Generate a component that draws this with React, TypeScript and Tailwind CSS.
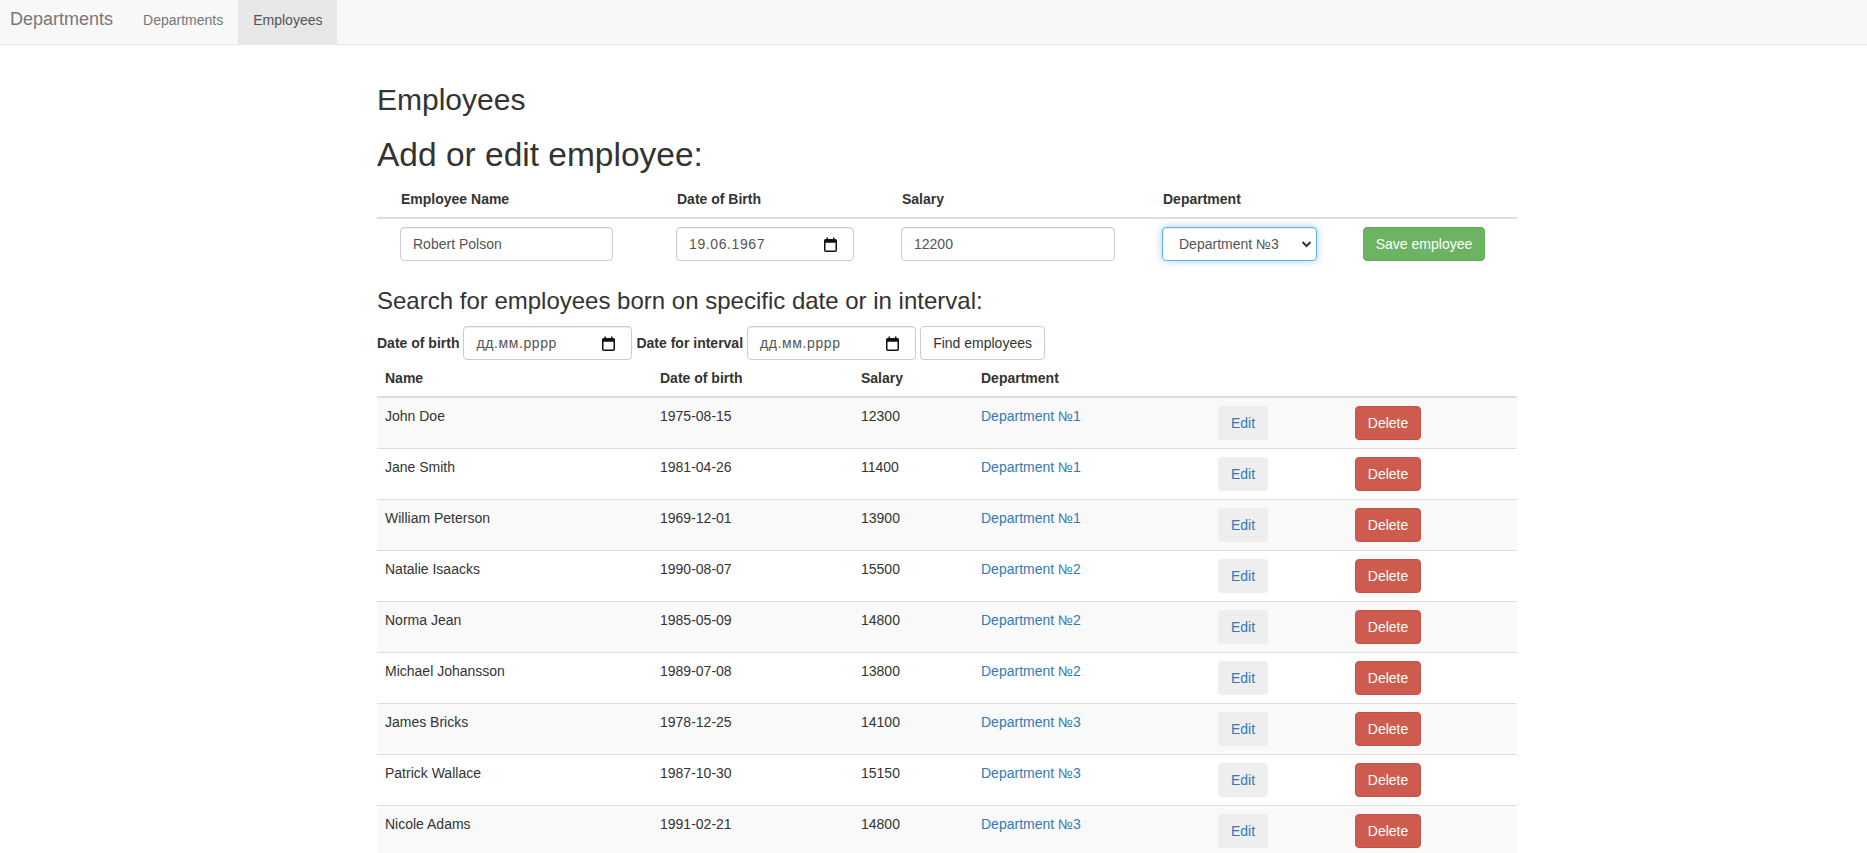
import React from 'react'

const employees = [
  { name: 'John Doe', born: '1975-08-15', salary: '12300', dept: 'Department №1' },
  { name: 'Jane Smith', born: '1981-04-26', salary: '11400', dept: 'Department №1' },
  { name: 'William Peterson', born: '1969-12-01', salary: '13900', dept: 'Department №1' },
  { name: 'Natalie Isaacks', born: '1990-08-07', salary: '15500', dept: 'Department №2' },
  { name: 'Norma Jean', born: '1985-05-09', salary: '14800', dept: 'Department №2' },
  { name: 'Michael Johansson', born: '1989-07-08', salary: '13800', dept: 'Department №2' },
  { name: 'James Bricks', born: '1978-12-25', salary: '14100', dept: 'Department №3' },
  { name: 'Patrick Wallace', born: '1987-10-30', salary: '15150', dept: 'Department №3' },
  { name: 'Nicole Adams', born: '1991-02-21', salary: '14800', dept: 'Department №3' },
]

const CalendarIcon = () => (
  <svg width="13" height="15" viewBox="0 0 13 15" className="shrink-0">
    <rect x="0.75" y="2.75" width="11.5" height="11.5" rx="1" fill="none" stroke="#111" strokeWidth="1.5" />
    <rect x="0.75" y="2.75" width="11.5" height="3" fill="#111" />
    <rect x="2.5" y="0.5" width="1.5" height="3" fill="#111" />
    <rect x="9" y="0.5" width="1.5" height="3" fill="#111" />
  </svg>
)

const inputBase =
  'h-[34px] rounded-[4px] border border-[#ccc] bg-white px-3 text-[14px] text-[#555] shadow-[inset_0_1px_1px_rgba(0,0,0,0.075)]'

const DateField = ({ value, className }: { value: string; className: string }) => (
  <div className={`${inputBase} flex items-center justify-between pr-[16px] ${className}`}>
    <span className="tracking-[0.6px]">{value}</span>
    <CalendarIcon />
  </div>
)

const Navbar = () => (
  <div className="flex h-[45px] border-b border-[#e7e7e7] bg-[#f8f8f8]">
    <a className="pl-[10px] pr-[15px] pt-[9px] text-[18px] leading-[20px] text-[#777]">Departments</a>
    <a className="px-[15px] pt-[10px] text-[14px] leading-[20px] text-[#777]">Departments</a>
    <a className="bg-[#e7e7e7] px-[15px] pt-[10px] text-[14px] leading-[20px] text-[#555]">Employees</a>
  </div>
)

const EmployeeForm = () => (
  <div className="mt-[8px]">
    <div className="grid h-[38px] grid-cols-[299px_225px_261px_201px_154px] border-b-2 border-[#ddd] text-[14px] font-bold leading-[20px] text-[#333]">
      <div className="pl-[24px] pt-2">Employee Name</div>
      <div className="pl-px pt-2">Date of Birth</div>
      <div className="pl-px pt-2">Salary</div>
      <div className="pl-px pt-2">Department</div>
      <div />
    </div>
    <div className="grid grid-cols-[299px_225px_261px_201px_154px] py-2">
      <div className="pl-[23px]">
        <div className={`${inputBase} flex w-[213px] items-center`}>Robert Polson</div>
      </div>
      <div>
        <DateField value="19.06.1967" className="w-[178px]" />
      </div>
      <div>
        <div className={`${inputBase} flex w-[214px] items-center`}>12200</div>
      </div>
      <div>
        <div className="flex h-[34px] w-[155px] items-center justify-between rounded-[4px] border border-[#66afe9] bg-white pl-[16px] pr-[4px] text-[14px] text-[#555] shadow-[inset_0_1px_1px_rgba(0,0,0,0.075),0_0_8px_rgba(102,175,233,0.6)]">
          <span>Department №3</span>
          <svg width="11" height="8" viewBox="0 0 11 8">
            <path d="M1.5 2 L5.5 6 L9.5 2" fill="none" stroke="#333" strokeWidth="2" />
          </svg>
        </div>
      </div>
      <div>
        <button className="h-[34px] w-[122px] rounded-[4px] border border-[#64ad58] bg-[#6db462] text-[14px] text-white">
          Save employee
        </button>
      </div>
    </div>
  </div>
)

const SearchForm = () => (
  <div className="mt-[12px] flex items-center gap-[4px] text-[14px] text-[#333]">
    <span className="font-bold">Date of birth</span>
    <DateField value="дд.мм.рррр" className="w-[169px]" />
    <span className="font-bold">Date for interval</span>
    <DateField value="дд.мм.рррр" className="w-[169px]" />
    <button className="h-[34px] w-[125px] rounded-[4px] border border-[#ccc] bg-white text-[14px] text-[#333]">
      Find employees
    </button>
  </div>
)

const cols = 'grid grid-cols-[275px_201px_120px_237px_137px_170px]'

const EmployeeTable = () => (
  <div className="text-[14px] leading-[20px] text-[#333]">
    <div className={`${cols} border-b-2 border-[#ddd] font-bold`}>
      <div className="p-2">Name</div>
      <div className="p-2">Date of birth</div>
      <div className="p-2">Salary</div>
      <div className="p-2">Department</div>
      <div className="p-2" />
      <div className="p-2" />
    </div>
    {employees.map((e, i) => (
      <div key={e.name} className={`${cols} border-b border-[#ddd] ${i % 2 === 0 ? 'bg-[#f9f9f9]' : 'bg-white'}`}>
        <div className="p-2">{e.name}</div>
        <div className="p-2">{e.born}</div>
        <div className="p-2">{e.salary}</div>
        <div className="p-2">
          <a className="text-[#337ab7]">{e.dept}</a>
        </div>
        <div className="p-2">
          <button className="h-[34px] w-[50px] rounded-[4px] bg-[#eeeeee] text-[#337ab7]">Edit</button>
        </div>
        <div className="p-2">
          <button className="h-[34px] w-[66px] rounded-[4px] border border-[#c55347] bg-[#cd5c4f] text-white">
            Delete
          </button>
        </div>
      </div>
    ))}
  </div>
)

const App = () => {
  return (
    <div className="h-[853px] overflow-hidden bg-white font-['Liberation_Sans',Arial,sans-serif] text-[#333]">
      <Navbar />
      <div className="ml-[377px] w-[1140px]">
        <h2 className="mt-[38px] text-[30px] leading-[33px] text-[#333]">Employees</h2>
        <h2 className="mt-[21px] text-[33.5px] leading-[36px] text-[#333]">Add or edit employee:</h2>
        <EmployeeForm />
        <h3 className="mt-[19px] text-[24px] leading-[26px] text-[#333]">
          Search for employees born on specific date or in interval:
        </h3>
        <SearchForm />
        <EmployeeTable />
      </div>
    </div>
  )
}

export default App
